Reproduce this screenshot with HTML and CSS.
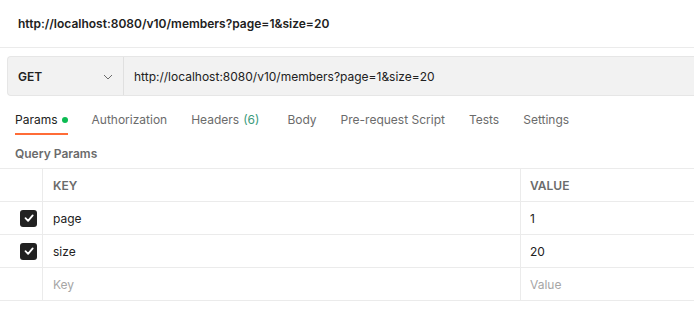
FILE: index.html
```html
<!DOCTYPE html>
<html lang="en">
<head>
    <meta charset="UTF-8">
    <title>Request</title>
    <link rel="stylesheet" href="styles.css">
</head>
<body>
    <div class="title-bar">http://localhost:8080/v10/members?page=1&amp;size=20</div>
    <div class="request-bar">
        <div class="method">
            <span>GET</span>
            <svg class="chevron" width="10" height="6" viewBox="0 0 10 6"><path d="M1 1l4 4 4-4" fill="none" stroke="#6b6b6b" stroke-width="1"/></svg>
        </div>
        <div class="url">http://localhost:8080/v10/members?page=1&amp;size=20</div>
    </div>
    <div class="tabs">
        <div class="tab active">Params <span class="dot"></span></div>
        <div class="tab">Authorization</div>
        <div class="tab">Headers <span class="count">(6)</span></div>
        <div class="tab">Body</div>
        <div class="tab">Pre-request Script</div>
        <div class="tab">Tests</div>
        <div class="tab">Settings</div>
    </div>
    <div class="section-title">Query Params</div>
    <div class="table">
        <div class="row head">
            <div class="cell check"></div>
            <div class="cell key">KEY</div>
            <div class="cell value">VALUE</div>
        </div>
        <div class="row">
            <div class="cell check"><span class="box"><svg width="12" height="10" viewBox="0 0 12 10"><path d="M2.5 5.2l2.6 2.6 4.6-5.4" fill="none" stroke="#fff" stroke-width="1.8" stroke-linecap="round" stroke-linejoin="round"/></svg></span></div>
            <div class="cell key">page</div>
            <div class="cell value">1</div>
        </div>
        <div class="row">
            <div class="cell check"><span class="box"><svg width="12" height="10" viewBox="0 0 12 10"><path d="M2.5 5.2l2.6 2.6 4.6-5.4" fill="none" stroke="#fff" stroke-width="1.8" stroke-linecap="round" stroke-linejoin="round"/></svg></span></div>
            <div class="cell key">size</div>
            <div class="cell value">20</div>
        </div>
        <div class="row">
            <div class="cell check"></div>
            <div class="cell key placeholder">Key</div>
            <div class="cell value placeholder">Value</div>
        </div>
    </div>
</body>
</html>
```

FILE: styles.css
```css
body {
    margin: 0;
    background: #ffffff;
    color: #212121;
    font-family: Inter, "Noto Sans", sans-serif;
    font-size: 12px;
    overflow: hidden;
}
.title-bar {
    height: 48px;
    padding-left: 18px;
    display: flex;
    align-items: center;
    font-weight: 600;
    border-bottom: 1px solid #ebebeb;
    box-sizing: border-box;
}
.request-bar {
    display: flex;
    height: 40px;
    margin: 8px 0 0 7px;
    background: #f2f2f2;
    border: 1px solid #e6e6e6;
    border-right: none;
    border-radius: 4px 0 0 4px;
    box-sizing: border-box;
}
.method {
    width: 116px;
    display: flex;
    align-items: center;
    justify-content: space-between;
    padding: 0 10px 0 10px;
    box-sizing: border-box;
    border-right: 1px solid #e0e0e0;
    font-weight: 600;
}
.chevron {
    margin-top: 1px;
}
.url {
    display: flex;
    align-items: center;
    padding-left: 10px;
}
.tabs {
    display: flex;
    gap: 24px;
    padding: 0 15px;
    height: 31px;
    margin-top: 8px;
}
.tab {
    display: flex;
    align-items: center;
    color: #6b6b6b;
    border-bottom: 2px solid transparent;
    box-sizing: border-box;
    padding-top: 1px;
}
.tab.active {
    color: #212121;
    border-bottom-color: #ff6c37;
}
.dot {
    width: 6px;
    height: 6px;
    border-radius: 50%;
    background: #0cbb52;
    margin-left: 4px;
    margin-top: 1px;
}
.count {
    margin: 0 4px 0 4px;
    color: #3a9a7c;
}
.section-title {
    padding: 3px 0 0 15px;
    height: 33px;
    box-sizing: border-box;
    display: flex;
    align-items: center;
    font-weight: 600;
    color: #6b6b6b;
}
.table {
    border-top: 1px solid #ebebeb;
}
.row {
    display: flex;
    height: 33px;
    border-bottom: 1px solid #ebebeb;
    box-sizing: border-box;
}
.cell {
    display: flex;
    align-items: center;
    padding-left: 10px;
}
.cell.check {
    width: 43px;
    box-sizing: border-box;
    border-right: 1px solid #ebebeb;
    padding: 0 5px 0 0;
    justify-content: flex-end;
}
.cell.key {
    width: 478px;
    box-sizing: border-box;
    border-right: 1px solid #ebebeb;
}
.cell.value {
    flex: 1;
    padding-left: 9px;
}
.head .cell.key, .head .cell.value {
    font-weight: 600;
    color: #6b6b6b;
}
.placeholder {
    color: #a6a6a6;
}
.box {
    width: 17px;
    height: 17px;
    border-radius: 3px;
    background: #212121;
    display: flex;
    align-items: center;
    justify-content: center;
}
```
